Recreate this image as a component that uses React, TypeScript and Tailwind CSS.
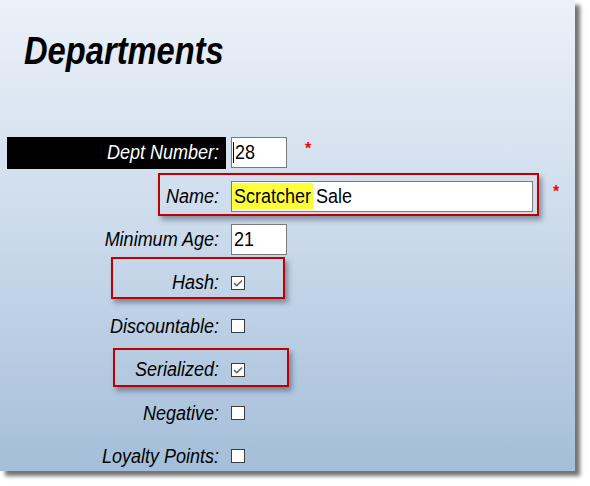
import type { ReactNode } from "react";

const font = { fontFamily: '"Liberation Sans", Arial, sans-serif' };

function CheckBox({ checked }: { checked?: boolean }) {
  return (
    <span className="ml-[5px] flex h-[14px] w-[14px] items-center justify-center border border-[#3c3c3c] bg-white">
      {checked && (
        <svg width="12" height="12" viewBox="0 0 12 12">
          <polyline points="2,6 4.8,8.8 10,3.5" fill="none" stroke="#5e5e5e" strokeWidth="1.5" />
        </svg>
      )}
    </span>
  );
}

function Row({ label, dark, children }: { label: string; dark?: boolean; children: ReactNode }) {
  return (
    <div className="relative flex h-[43.4px] items-center">
      <div
        className={
          dark
            ? "flex h-[32px] w-[219px] items-center justify-end bg-black pr-[7px] text-[18px] italic text-white"
            : "flex h-[32px] w-[219px] items-center justify-end pr-[7px] text-[18px] italic text-black"
        }
      >
        <span className="inline-block scale-y-[1.15]">{label}</span>
      </div>
      {children}
    </div>
  );
}

function Callout({ className }: { className: string }) {
  return (
    <div
      className={
        "pointer-events-none absolute border-2 border-[#c00000] shadow-[3px_4px_5px_rgba(40,50,70,0.45)] " + className
      }
    />
  );
}

export default function App() {
  return (
    <div className="h-[486px] w-[590px] bg-white" style={font}>
      <div className="relative h-[471px] w-[575px] bg-linear-to-b from-[#ebf1f8] via-[#cbdaeb] to-[#a4bed9] shadow-[5px_5px_4px_rgba(0,0,0,0.55)]">
        <div className="pl-[24px] pt-[32px]">
          <h1 className="origin-left scale-x-[0.86] text-[38px] font-bold italic leading-none text-black">
            Departments
          </h1>
        </div>

        <div className="ml-[7px] mt-[61px]">
          <Row label="Dept Number:" dark>
            <div className="ml-[5px] flex h-[31px] w-[56px] items-center border border-[#7a7a7a] bg-white pl-[1px] text-[18px]">
              <span className="mr-[1px] h-[21px] w-px bg-black" />
              <span className="inline-block scale-y-[1.15]">28</span>
            </div>
            <span className="ml-[18px] -mt-[8px] text-[16px] font-bold text-[#ff0000]">*</span>
          </Row>

          <Row label="Name:">
            <Callout className="-top-[1px] left-[151px] h-[43px] w-[381px]" />
            <div className="ml-[5px] flex h-[31px] w-[302px] items-center border border-[#7a7a7a] bg-white text-[18px]">
              <span className="flex h-[27px] items-center bg-[#ffff3a] pl-[2px] pr-[2px]">
                <span className="inline-block scale-y-[1.15]">Scratcher</span>
              </span>
              <span className="ml-[3px] inline-block scale-y-[1.15]">Sale</span>
            </div>
            <span className="ml-[20px] -mt-[8px] text-[16px] font-bold text-[#ff0000]">*</span>
          </Row>

          <Row label="Minimum Age:">
            <div className="ml-[5px] flex h-[31px] w-[56px] items-center border border-[#7a7a7a] bg-white pl-[2px] text-[18px]">
              <span className="inline-block scale-y-[1.15]">21</span>
            </div>
          </Row>

          <Row label="Hash:">
            <Callout className="-top-[4px] left-[104px] h-[42px] w-[174px]" />
            <CheckBox checked />
          </Row>

          <Row label="Discountable:">
            <CheckBox />
          </Row>

          <Row label="Serialized:">
            <Callout className="top-0 left-[106px] h-[39px] w-[176px]" />
            <CheckBox checked />
          </Row>

          <Row label="Negative:">
            <CheckBox />
          </Row>

          <Row label="Loyalty Points:">
            <CheckBox />
          </Row>
        </div>
      </div>
    </div>
  );
}
